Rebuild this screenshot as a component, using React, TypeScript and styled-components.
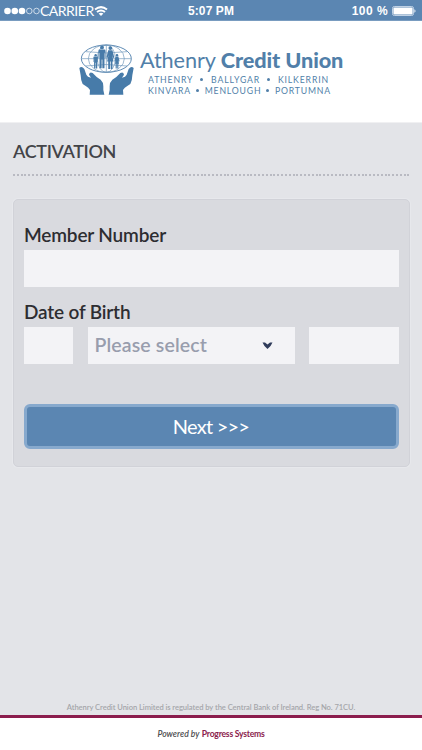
import React from 'react';
import styled, { createGlobalStyle } from 'styled-components';

const GlobalStyle = createGlobalStyle`
  * { box-sizing: border-box; }
  html, body { margin: 0; padding: 0; }
  body { font-family: Lato, 'Liberation Sans', sans-serif; background: #e3e4e8; }
`;

const Screen = styled.div`
  width: 422px;
  height: 750px;
  display: flex;
  flex-direction: column;
  background: #e3e4e8;
  overflow: hidden;
`;

const StatusBar = styled.header`
  height: 21px;
  flex: none;
  display: grid;
  grid-template-columns: 184px 50px 1fr;
  align-items: center;
  padding: 0 6px 0 4px;
  background: #5b86b2;
  border-bottom: 1px solid #799cc0;
  color: #fff;
`;

const StatusGroup = styled.div<{ $end?: boolean }>`
  display: flex;
  align-items: center;
  justify-content: ${(p) => (p.$end ? 'flex-end' : 'flex-start')};
  height: 20px;
`;

const Carrier = styled.span`
  font-size: 14px;
  line-height: 20px;
  letter-spacing: -0.5px;
  white-space: nowrap;
`;

const StatusText = styled.span<{ $spacing: number }>`
  font: bold 12px/20px 'Liberation Sans', Arial, sans-serif;
  letter-spacing: ${(p) => p.$spacing}px;
  white-space: nowrap;
  padding-top: 1px;
`;

const Brand = styled.div`
  height: 102px;
  flex: none;
  display: flex;
  align-items: flex-start;
  padding: 19px 0 0 74px;
  background: #fff;
  border-bottom: 1px solid #f0f0f2;
  color: #517fa9;
`;

const BrandText = styled.div`
  width: 212px;
  padding: 8px 0 0 2px;
`;

const BrandName = styled.div`
  height: 26px;
  font-size: 21.7px;
  line-height: 24px;
  letter-spacing: -0.1px;
  white-space: nowrap;
  b { font-weight: 900; }
`;

const Towns = styled.div<{ $width: number; $spacing: number }>`
  display: flex;
  align-items: center;
  justify-content: space-between;
  width: ${(p) => p.$width}px;
  height: 11px;
  margin-left: 8px;
  font-size: 8.7px;
  line-height: 11px;
  letter-spacing: ${(p) => p.$spacing}px;
`;

const Bullet = styled.i`
  width: 3px;
  height: 3px;
  margin-right: 1px;
  border-radius: 50%;
  background: currentColor;
`;

const Main = styled.main`
  flex: 1;
  padding: 0 12px 0 13px;
`;

const Title = styled.h1`
  margin: 0;
  padding-top: 16px;
  height: 51px;
  font-size: 18px;
  line-height: 24px;
  font-weight: 600;
  letter-spacing: -0.35px;
  color: #434448;
`;

const DottedRule = styled.div`
  height: 2px;
  margin-right: -1px;
  background: repeating-linear-gradient(90deg, #b9bac2 0 2px, transparent 2px 3.83px);
`;

const Panel = styled.form`
  margin-top: 23px;
  height: 268px;
  padding: 24px 10px 0;
  background: #d9dadf;
  border: 1px solid #d1d2d8;
  border-radius: 5px;
  box-shadow: 0 0 0 1px #e7e8ec;
`;

const Label = styled.label<{ $spacing: number }>`
  display: block;
  height: 26px;
  font-size: 19px;
  line-height: 22px;
  font-weight: 600;
  letter-spacing: ${(p) => p.$spacing}px;
  color: #2d2d31;
`;

const fieldColor = '#f3f3f6';

const Field = styled.input`
  display: block;
  width: 100%;
  height: 37px;
  border: 0;
  border-radius: 0;
  padding: 0 7px;
  font: 600 19px Lato, sans-serif;
  background: ${fieldColor};
  outline: none;
`;

const Gap = styled.div`
  height: 14px;
`;

const DateRow = styled.div`
  display: grid;
  grid-template-columns: 49px 207px 90px;
  justify-content: space-between;
`;

const Select = styled.button`
  display: flex;
  align-items: center;
  justify-content: space-between;
  height: 37px;
  border: 0;
  padding: 0 22px 1px 7px;
  background: ${fieldColor};
  color: #989dad;
  font: 600 19.5px/24px Lato, sans-serif;
  letter-spacing: 0.12px;
`;

const NextButton = styled.button`
  display: block;
  width: 100%;
  height: 45px;
  margin-top: 40px;
  padding: 0 1px 1px 0;
  border: 3px solid #87a9cd;
  border-radius: 6px;
  background: #5b86b2;
  color: #fff;
  font: 400 20px/36px Lato, sans-serif;
  letter-spacing: -0.75px;
`;

const Chevrons = styled.span`
  letter-spacing: -0.8px;
`;

const Legal = styled.p`
  margin: 0;
  height: 14px;
  font-size: 7.6px;
  line-height: 13px;
  font-weight: 600;
  text-align: center;
  letter-spacing: -0.06px;
  color: #a5a6aa;
  white-space: nowrap;
`;

const Footer = styled.footer`
  height: 35px;
  flex: none;
  background: #fff;
  border-top: 3px solid #8b1d4d;
  text-align: center;
  font-size: 8.6px;
  line-height: 33px;
  font-weight: 600;
  letter-spacing: 0.05px;
  color: #4c4c4e;
  b {
    color: #8b1d4d;
    font-weight: 700;
    letter-spacing: -0.23px;
  }
`;

const SignalDots = () => (
  <svg width="36" height="8" viewBox="0 0 36 8">
    {[3.5, 10.8, 18].map((x) => <circle key={x} cx={x} cy="4" r="3.3" fill="#fff" />)}
    {[25.3, 32.5].map((x) => (
      <circle key={x} cx={x} cy="4" r="2.8" fill="none" stroke="#e7eef5" strokeWidth=".8" />
    ))}
  </svg>
);

const WifiIcon = () => (
  <svg width="14" height="10" viewBox="0 0 14 10" fill="none" stroke="#fff" strokeWidth="2">
    <path d="M1 3.6Q7-1.4 13 3.6M3 6.1Q7 2.8 11 6.1" />
    <path d="M7 10L4.6 7.6Q7 5.8 9.4 7.6Z" fill="#fff" stroke="none" />
  </svg>
);

const BatteryIcon = () => (
  <svg width="24" height="10" viewBox="0 0 24 10">
    <rect x=".5" y=".5" width="21" height="9" rx="1.8" fill="none" stroke="#bfd1e5" />
    <rect x="1.4" y="1.4" width="19.2" height="7.2" rx="1" fill="#fff" />
    <path d="M22.3 3.3Q23.6 4 23.6 5T22.3 6.7Z" fill="#dce6f0" />
  </svg>
);

const Hand = () => (
  <path d="M16 84Q23 76 31 87L37 104L42 110L51 113L45 104Q47 94 56 99L68 111L80 119Q88 126 88 139V150L91 164H47L48 150Q44 142 34 137L26 132Q20 119 20 106Z" />
);

const Person = ({ x, y, s, skirt }: { x: number; y: number; s: number; skirt?: boolean }) => (
  <g transform={`translate(${x} ${y}) scale(${s})`}>
    <circle cx="0" cy="5" r="5.4" />
    <path
      d={skirt
        ? 'M-6 11H6L11 31L8 34L5 24L9 43H6V64H1V43H-1V64H-6V43H-9L-5 24L-8 34L-11 31Z'
        : 'M-7 11H7Q10 11 10 15V35H8V20H7V64H1V39H-1V64H-7V20H-8V35H-10V15Q-10 11-7 11Z'}
    />
  </g>
);

const Emblem = () => (
  <svg width="64" height="60" viewBox="0 0 192 180" fill="#477ba9">
    <g fill="none" stroke="#6c95ba" strokeWidth="2">
      <ellipse cx="97" cy="56" rx="75" ry="41" stroke="#5483af" strokeWidth="2.8" />
      <ellipse cx="97" cy="56" rx="54" ry="41" />
      <ellipse cx="97" cy="56" rx="27" ry="41" />
      <path d="M97 15V97M22 56H172M35 35Q97 43 159 35M34 78Q97 69 160 78" />
    </g>
    <Person x={65} y={42} s={0.68} />
    <Person x={129} y={42} s={0.68} skirt />
    <Person x={84} y={17} s={1.06} />
    <Person x={109} y={19} s={1.06} skirt />
    <g stroke="#fff" strokeWidth="2" paintOrder="stroke">
      <Hand />
      <g transform="translate(195 0) scale(-1 1)"><Hand /></g>
    </g>
  </svg>
);

const SelectArrow = () => (
  <svg width="11" height="7" viewBox="0 0 11 7">
    <path d="M.5 .6H3L5.5 2.6L8 .6H10.5Q9.5 3.6 5.5 7Q1.5 3.6 .5 .6Z" fill="#303c5b" />
  </svg>
);

const TownList = ({ names, width, spacing }: { names: string[]; width: number; spacing: number }) => (
  <Towns $width={width} $spacing={spacing}>
    {names.map((name, i) => (
      <React.Fragment key={name}>
        {i > 0 && <Bullet />}
        <span>{name}</span>
      </React.Fragment>
    ))}
  </Towns>
);

export default function App() {
  return (
    <>
      <GlobalStyle />
      <Screen>
        <StatusBar>
          <StatusGroup>
            <SignalDots />
            <Carrier>CARRIER</Carrier>
            <WifiIcon />
          </StatusGroup>
          <StatusText $spacing={0.1}>5:07 PM</StatusText>
          <StatusGroup $end>
            <StatusText $spacing={0.5}>100 %&nbsp;</StatusText>
            <BatteryIcon />
          </StatusGroup>
        </StatusBar>
        <Brand>
          <Emblem />
          <BrandText>
            <BrandName>Athenry <b>Credit Union</b></BrandName>
            <TownList names={['ATHENRY', 'BALLYGAR', 'KILKERRIN']} width={181} spacing={0.86} />
            <TownList names={['KINVARA', 'MENLOUGH', 'PORTUMNA']} width={183} spacing={0.8} />
          </BrandText>
        </Brand>
        <Main>
          <Title>ACTIVATION</Title>
          <DottedRule />
          <Panel>
            <Label htmlFor="member" $spacing={-0.17}>Member Number</Label>
            <Field id="member" />
            <Gap />
            <Label htmlFor="day" $spacing={-0.17}>Date of Birth</Label>
            <DateRow>
              <Field id="day" />
              <Select type="button">
                <span>Please select</span>
                <SelectArrow />
              </Select>
              <Field aria-label="Year" />
            </DateRow>
            <NextButton type="button">Next <Chevrons>&gt;&gt;&gt;</Chevrons></NextButton>
          </Panel>
        </Main>
        <Legal>Athenry Credit Union Limited is regulated by the Central Bank of Ireland. Reg No. 71CU.</Legal>
        <Footer><em>Powered by</em> <b>Progress Systems</b></Footer>
      </Screen>
    </>
  );
}
